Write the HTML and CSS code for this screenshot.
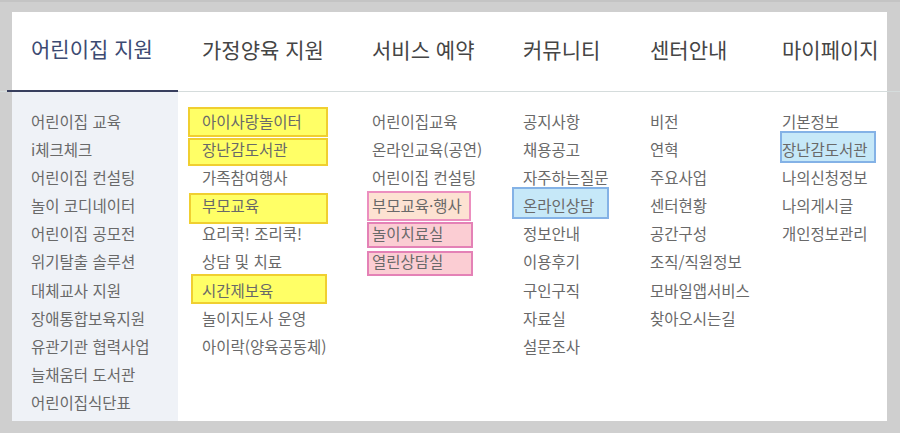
FILE: index.html
```html
<!DOCTYPE html>
<html lang="ko">
<head>
<meta charset="utf-8">
<title>메뉴</title>
<link rel="stylesheet" href="styles.css">
</head>
<body>
<header class="gnb">
  <ul class="gnb-list">
    <li class="gnb-item is-active">어린이집 지원</li>
    <li class="gnb-item">가정양육 지원</li>
    <li class="gnb-item">서비스 예약</li>
    <li class="gnb-item">커뮤니티</li>
    <li class="gnb-item">센터안내</li>
    <li class="gnb-item">마이페이지</li>
  </ul>
</header>
<div class="panel">
  <ul class="sub sub-first">
    <li>어린이집 교육</li>
    <li>i체크체크</li>
    <li>어린이집 컨설팅</li>
    <li>놀이 코디네이터</li>
    <li>어린이집 공모전</li>
    <li>위기탈출 솔루션</li>
    <li>대체교사 지원</li>
    <li>장애통합보육지원</li>
    <li>유관기관 협력사업</li>
    <li>늘채움터 도서관</li>
    <li>어린이집식단표</li>
  </ul>
  <ul class="sub">
    <li class="mk mk-yellow mk-a">아이사랑놀이터</li>
    <li class="mk mk-yellow mk-b">장난감도서관</li>
    <li>가족참여행사</li>
    <li class="mk mk-yellow mk-c">부모교육</li>
    <li>요리쿡! 조리쿡!</li>
    <li>상담 및 치료</li>
    <li class="mk mk-yellow mk-d">시간제보육</li>
    <li>놀이지도사 운영</li>
    <li>아이락(양육공동체)</li>
  </ul>
  <ul class="sub">
    <li>어린이집교육</li>
    <li>온라인교육(공연)</li>
    <li>어린이집 컨설팅</li>
    <li class="mk mk-peach mk-e">부모교육·행사</li>
    <li class="mk mk-pink mk-f">놀이치료실</li>
    <li class="mk mk-pink mk-g">열린상담실</li>
  </ul>
  <ul class="sub">
    <li>공지사항</li>
    <li>채용공고</li>
    <li>자주하는질문</li>
    <li class="mk mk-blue mk-h">온라인상담</li>
    <li>정보안내</li>
    <li>이용후기</li>
    <li>구인구직</li>
    <li>자료실</li>
    <li>설문조사</li>
  </ul>
  <ul class="sub">
    <li>비전</li>
    <li>연혁</li>
    <li>주요사업</li>
    <li>센터현황</li>
    <li>공간구성</li>
    <li>조직/직원정보</li>
    <li>모바일앱서비스</li>
    <li>찾아오시는길</li>
  </ul>
  <ul class="sub">
    <li>기본정보</li>
    <li class="mk mk-blue mk-i">장난감도서관</li>
    <li>나의신청정보</li>
    <li>나의게시글</li>
    <li>개인정보관리</li>
  </ul>
</div>
</body>
</html>
```

FILE: styles.css
```css
html, body {
  margin: 0;
}

body {
  width: 900px;
  height: 433px;
  box-sizing: border-box;
  overflow: hidden;
  background: #cfcfcf;
  border-top: 2px solid #c4c4c4;
  padding-top: 10px;
  font-family: "Noto Sans CJK KR", "Noto Sans", sans-serif;
}

.gnb {
  height: 79px;
  padding-left: 7px;
  background: linear-gradient(90deg, transparent 12px, #ffffff 12px, #ffffff 887px, transparent 887px);
  border-bottom: 1px solid #d5dcdc;
}

.gnb-list {
  display: grid;
  grid-template-columns: 171px 170px 151px 127px 132px 1fr;
  height: 100%;
  margin: 0;
  padding: 0;
  list-style: none;
}

.gnb-item {
  display: flex;
  align-items: center;
  padding: 0 0 6px 24px;
  margin-bottom: -1px;
  font-size: 21px;
  color: #454545;
  white-space: nowrap;
}

.gnb-item.is-active {
  color: #3c4a72;
  border-bottom: 2px solid #383f5e;
}

.panel {
  display: grid;
  grid-template-columns: 166px 170px 151px 127px 132px 1fr;
  height: 329px;
  margin: 0 13px 0 12px;
  background: #ffffff;
}

.sub {
  list-style: none;
  margin: 0;
  padding: 15px 0 0 24px;
  font-size: 15.5px;
  line-height: 28.1px;
  color: #696969;
}

.sub-first {
  background: #eff2f7;
  padding-left: 19px;
}

.sub li {
  position: relative;
  z-index: 0;
  white-space: nowrap;
}

.mk::before {
  content: "";
  position: absolute;
  z-index: -1;
  box-sizing: border-box;
}

.mk-yellow::before {
  background: #ffff66;
  border: 2px solid #f0cf30;
}

.mk-peach::before {
  background: #fde2d2;
  border: 2px solid #ec8fbf;
}

.mk-pink::before {
  background: #fbcdd3;
  border: 2px solid #e481b6;
}

.mk-blue::before {
  background: #c6e8f8;
  border: 2px solid #84b2e6;
}

.mk-a::before { left: -14px; top: 0; width: 140px; height: 30px; }
.mk-b::before { left: -14px; top: 3px; width: 140px; height: 28px; }
.mk-c::before { left: -13px; top: 2px; width: 139px; height: 31px; }
.mk-d::before { left: -11px; top: -2px; width: 136px; height: 30px; }
.mk-e::before { left: -5px; top: 0; width: 104px; height: 30px; }
.mk-f::before { left: -5px; top: 3px; width: 106px; height: 26px; }
.mk-g::before { left: -5px; top: 4px; width: 106px; height: 25px; }
.mk-h::before { left: -11px; top: -4px; width: 97px; height: 32px; }
.mk-i::before { left: -2px; top: -4px; width: 96px; height: 32px; }
```
